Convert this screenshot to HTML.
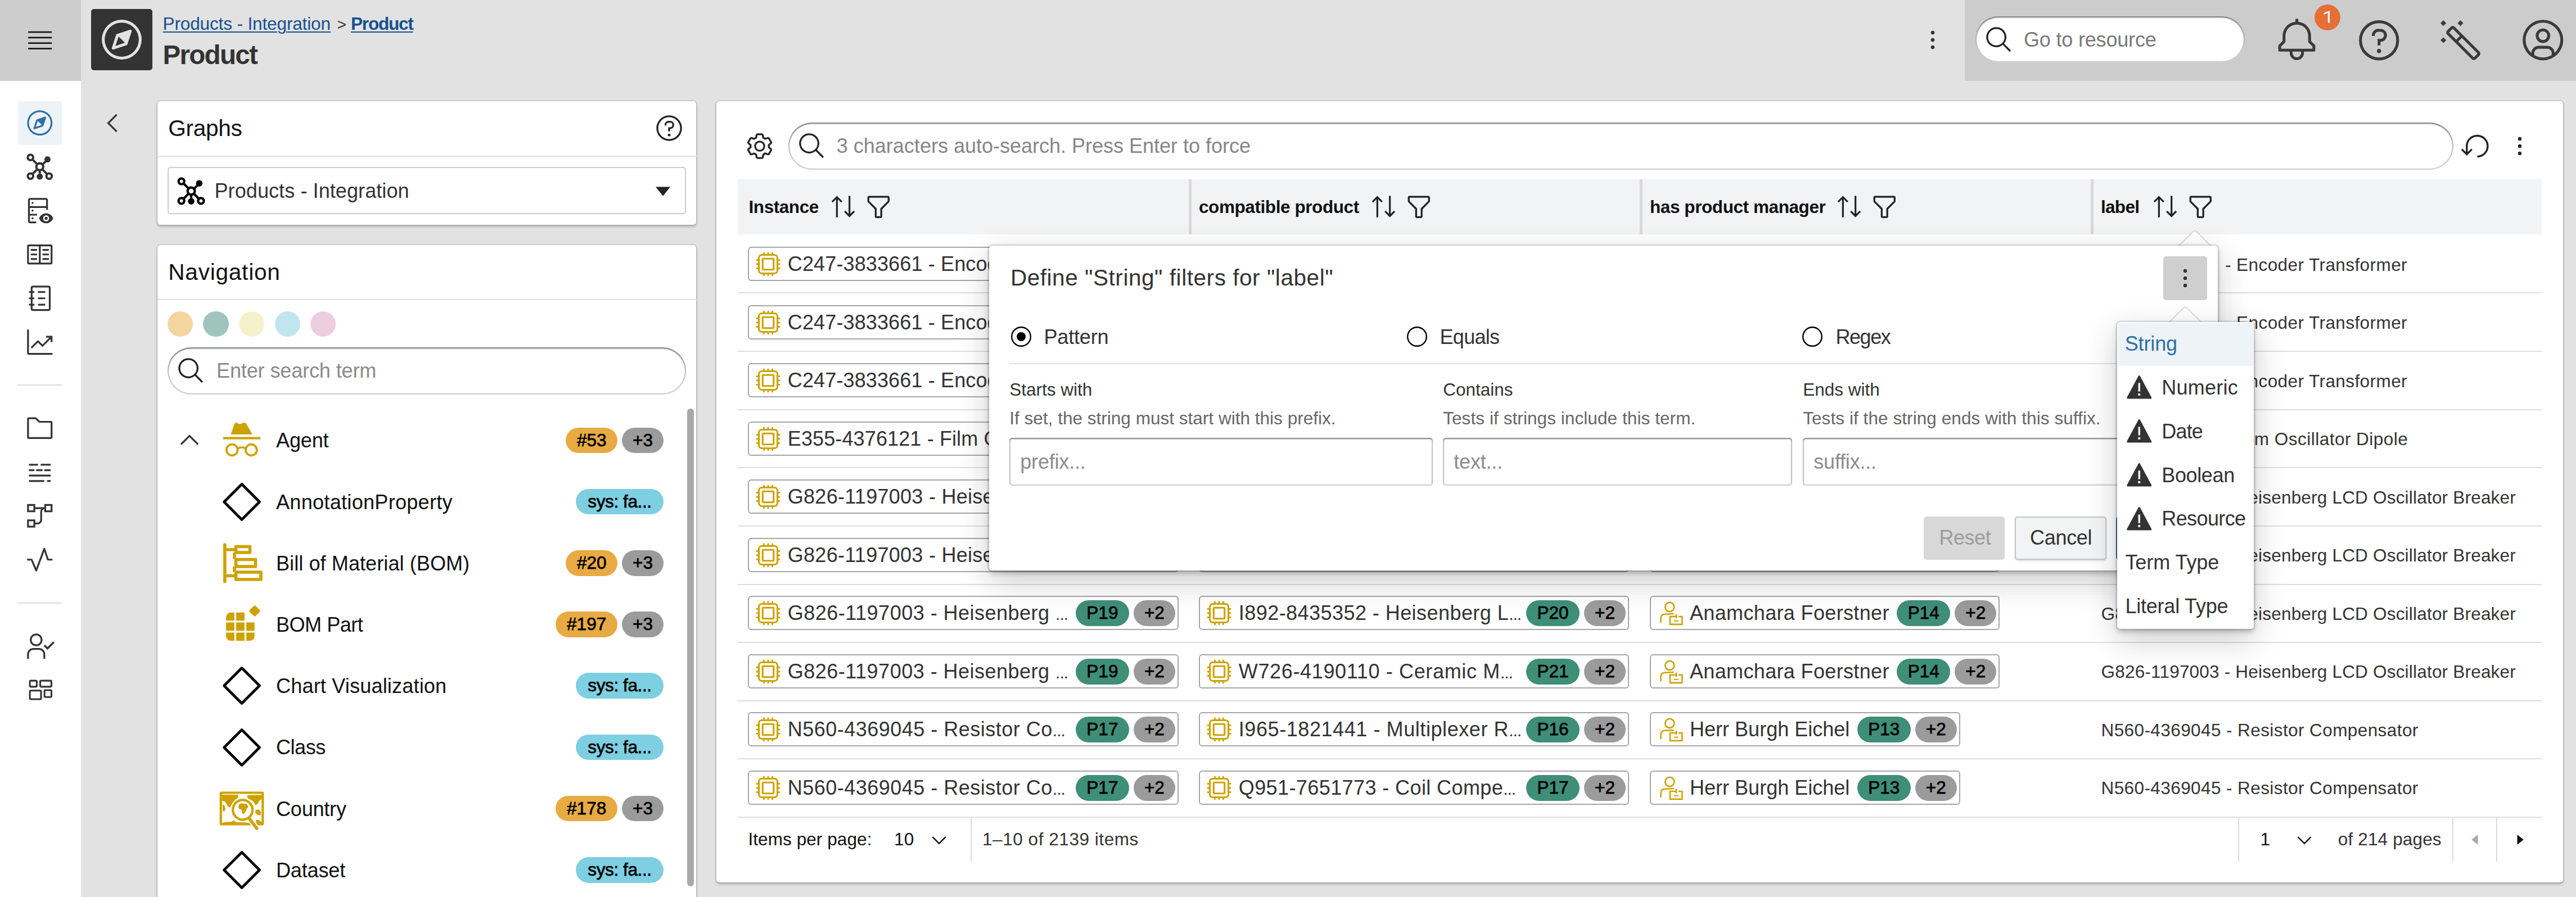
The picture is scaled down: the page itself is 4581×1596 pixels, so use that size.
<!DOCTYPE html>
<html><head><meta charset="utf-8"><title>Product</title>
<style>
html,body{margin:0;padding:0}
body{width:4581px;height:1596px;overflow:hidden;background:#e2e2e2;position:relative;font-family:"Liberation Sans",sans-serif;color:#333}
.t{position:absolute;white-space:pre;line-height:1}
.card{position:absolute;background:#fff;border-radius:5px;box-shadow:0 0 0 1.5px rgba(0,0,0,.12),0 3px 5px rgba(0,0,0,.22)}
.pill{position:absolute;background:#fff;border-radius:50px;box-shadow:inset 0 0 0 2.25px rgba(17,20,24,.2),inset 0 2.25px 2.25px rgba(17,20,24,.42)}
.inp{position:absolute;background:#fff;border-radius:5px;box-shadow:inset 0 0 0 2.25px rgba(17,20,24,.2),inset 0 2.25px 2.25px rgba(17,20,24,.36)}
.chip{position:absolute;box-sizing:border-box;height:61px;border:2px solid #a6a6a6;border-radius:6px;background:#fff}
.tag{position:absolute;height:45.5px;border-radius:23px;color:#000;font-size:31.5px;line-height:45.5px;text-align:center;white-space:pre;-webkit-text-stroke:0.75px #000}
.dots{font-size:30px;letter-spacing:-1px}
.sep{position:absolute;height:2px;background:#dedede}
</style></head>
<body>
<div style="position:absolute;left:0.0px;top:0.0px;width:144.0px;height:1596.0px;background:#fff"></div>
<div style="position:absolute;left:0.0px;top:0.0px;width:144.0px;height:144.0px;background:#cdcdcd"></div>
<svg style="position:absolute;left:0;top:0" width="144" height="144" viewBox="0 0 144 144" fill="#111"><rect x="50" y="55.80" width="42.2" height="2.6"/><rect x="50" y="65.60" width="42.2" height="2.6"/><rect x="50" y="75.40" width="42.2" height="2.6"/><rect x="50" y="85.20" width="42.2" height="2.6"/></svg>
<div style="position:absolute;left:32.0px;top:180.0px;width:78.0px;height:78.0px;background:#eef3f8;border-radius:5px"></div>
<svg style="position:absolute;left:45.2px;top:193.2px;color:#2f6fa7;" width="51.5" height="51.5" viewBox="0 0 32 32" fill="#2f6fa7"><path d="M22.707,9.2931a.9992.9992,0,0,0-1.0234-.2417l-9,3a1.001,1.001,0,0,0-.6323.6323l-3,9a1,1,0,0,0,1.2651,1.2651l9-3a1.0013,1.0013,0,0,0,.6323-.6324l3-9A1,1,0,0,0,22.707,9.2931ZM11.5811,20.419l2.2094-6.6284L18.21,18.21Z"/><path d="M16,30A14,14,0,1,1,30,16,14.0158,14.0158,0,0,1,16,30ZM16,4A12,12,0,1,0,28,16,12.0137,12.0137,0,0,0,16,4Z"/></svg>
<svg style="position:absolute;left:45.2px;top:271.2px;color:#333;" width="51.5" height="51.5" viewBox="0 0 32 32" fill="#333"><g fill="none" stroke="currentColor" stroke-width="2.5"><path d="M8.300 8.300l5 5M22.500 10l-4 4M8.300 23.700l5-5M16 19.500v4M23.700 23.700l-5-5"/><circle cx="16" cy="16" r="3.800" fill="#fff"/><circle cx="5.700" cy="5.700" r="3" fill="#fff"/><circle cx="5.700" cy="26.300" r="3" fill="#fff"/><circle cx="26.300" cy="26.300" r="3" fill="#fff"/></g><circle cx="24.500" cy="7.800" r="3.400"/><circle cx="16" cy="26.800" r="3.400"/></svg>
<svg style="position:absolute;left:45.2px;top:349.2px;color:#333;" width="51.5" height="51.5" viewBox="0 0 32 32" fill="#333"><g fill="none" stroke="currentColor" stroke-width="2" stroke-linejoin="round"><path d="M24 15V4.5a1.5 1.5 0 0 0-1.5-1.5h-17A1.5 1.5 0 0 0 4 4.5v23A1.5 1.5 0 0 0 5.500 29H12M4 12h20M4 20.500h9"/></g><circle cx="8" cy="7.5" r="1.1"/><circle cx="8" cy="16" r="1.1"/><circle cx="8" cy="24.500" r="1.1"/><path d="M30.8 24.500c-1.300-3.100-4.300-5.500-7.800-5.500s-6.500 2.400-7.800 5.500c1.300 3.100 4.300 5.500 7.800 5.500s6.500-2.400 7.800-5.500z"/><circle cx="23" cy="24.500" r="3.300" fill="#fff"/><circle cx="23" cy="24.500" r="1.700"/></svg>
<svg style="position:absolute;left:45.2px;top:427.2px;color:#333;" width="51.5" height="51.5" viewBox="0 0 32 32" fill="#333"><path d="M19 10H26V12H19zM19 15H26V17H19zM19 20H26V22H19zM6 10H13V12H6zM6 15H13V17H6zM6 20H13V22H6z"/><path d="M28,5H4A2.002,2.002,0,0,0,2,7V25a2.002,2.002,0,0,0,2,2H28a2.002,2.002,0,0,0,2-2V7A2.002,2.002,0,0,0,28,5ZM4,7H15V25H4ZM17,25V7H28V25Z"/></svg>
<svg style="position:absolute;left:45.2px;top:505.2px;color:#333;" width="51.5" height="51.5" viewBox="0 0 32 32" fill="#333"><g fill="none" stroke="currentColor" stroke-width="2" stroke-linejoin="round"><rect x="7" y="3" width="20" height="26" rx="1.5"/><path d="M4 9h6M4 16h6M4 23h6M14 9h8M14 16h8M14 23h8"/></g></svg>
<svg style="position:absolute;left:45.2px;top:583.2px;color:#333;" width="51.5" height="51.5" viewBox="0 0 32 32" fill="#333"><path d="M4,2H2V28a2,2,0,0,0,2,2H30V28H4Z"/><path d="M30,9H23v2h3.59L19,18.59l-4.29-4.3a1,1,0,0,0-1.42,0L6,21.59,7.41,23,14,16.41l4.29,4.3a1,1,0,0,0,1.42,0L28,12.41V16h2Z"/></svg>
<svg style="position:absolute;left:45.2px;top:736.2px;color:#333;" width="51.5" height="51.5" viewBox="0 0 32 32" fill="#333"><path d="M11.17,6l3.42,3.41.58.59H28V26H4V6h7.17m0-2H4A2,2,0,0,0,2,6V26a2,2,0,0,0,2,2H28a2,2,0,0,0,2-2V10a2,2,0,0,0-2-2H16L12.59,4.59A2,2,0,0,0,11.17,4Z"/></svg>
<svg style="position:absolute;left:45.2px;top:814.2px;color:#333;" width="51.5" height="51.5" viewBox="0 0 32 32" fill="#333"><path d="M4 7h10v2H4zM17 7h11v2H17zM4 13h6v2H4zM12 13h7v2h-7zM21 13h7v2h-7zM4 19h24v2H4zM4 25h17v2H4zM24 25h4v2h-4z"/></svg>
<svg style="position:absolute;left:45.2px;top:892.2px;color:#333;" width="51.5" height="51.5" viewBox="0 0 32 32" fill="#333"><g fill="none" stroke="currentColor" stroke-width="2"><rect x="3" y="4" width="7" height="7"/><rect x="22" y="4" width="7" height="7"/><rect x="3" y="21" width="7" height="7"/><path d="M10 7.500h12M10 24.500h3.500a4 4 0 0 0 4-4v-9a4 4 0 0 1 4-4"/></g></svg>
<svg style="position:absolute;left:45.2px;top:970.2px;color:#333;" width="51.5" height="51.5" viewBox="0 0 32 32" fill="#333"><path d="M12,29a1,1,0,0,1-.92-.62L6.33,17H2V15H7a1,1,0,0,1,.92.62L12,25.28,20.06,3.65A1,1,0,0,1,21,3a1,1,0,0,1,.93.68L25.72,15H30v2H25a1,1,0,0,1-.95-.68L21,7,12.94,28.35A1,1,0,0,1,12,29Z"/></svg>
<svg style="position:absolute;left:45.2px;top:1124.2px;color:#333;" width="51.5" height="51.5" viewBox="0 0 32 32" fill="#333"><g fill="none" stroke="currentColor" stroke-width="2"><circle cx="12" cy="9" r="6"/><path d="M3 30v-5a6 6 0 0 1 6-6h6a6 6 0 0 1 6 6v5"/><path d="M21 15l3.500 3.500 7-7" stroke-width="2.2"/></g></svg>
<svg style="position:absolute;left:46.8px;top:1204.8px;color:#333;" width="49" height="49" viewBox="0 0 32 32" fill="#333"><g fill="none" stroke="currentColor" stroke-width="2" stroke-linejoin="round"><rect x="4" y="4" width="8" height="7" rx="1"/><rect x="16" y="4" width="13" height="7" rx="1"/><rect x="4" y="15.500" width="13" height="10" rx="1"/><rect x="21" y="15" width="8" height="8" rx="1"/></g></svg>
<div style="position:absolute;left:32.0px;top:684.0px;width:78.0px;height:2.3px;background:#dcdcdc"></div>
<div style="position:absolute;left:32.0px;top:1071.5px;width:78.0px;height:2.3px;background:#dcdcdc"></div>
<div style="position:absolute;left:162.0px;top:16.0px;width:108.7px;height:108.7px;background:#333;border-radius:5px"></div>
<svg style="position:absolute;left:175.8px;top:29.8px;" width="81" height="81" viewBox="0 0 32 32" fill="#e2e2e2"><path d="M22.707,9.2931a.9992.9992,0,0,0-1.0234-.2417l-9,3a1.001,1.001,0,0,0-.6323.6323l-3,9a1,1,0,0,0,1.2651,1.2651l9-3a1.0013,1.0013,0,0,0,.6323-.6324l3-9A1,1,0,0,0,22.707,9.2931ZM11.5811,20.419l2.2094-6.6284L18.21,18.21Z"/><path d="M16,30A14,14,0,1,1,30,16,14.0158,14.0158,0,0,1,16,30ZM16,4A12,12,0,1,0,28,16,12.0137,12.0137,0,0,0,16,4Z"/></svg>
<div class="t" style="left:289.6px;top:27.1px;font-size:31.5px;color:#15508f;letter-spacing:-0.13px;text-decoration:underline;text-decoration-thickness:2.3px;text-underline-offset:3px;">Products - Integration</div>
<div class="t" style="left:599.5px;top:29.6px;font-size:28px;">&gt;</div>
<div class="t" style="left:624.0px;top:27.1px;font-size:31.5px;font-weight:700;color:#15508f;letter-spacing:-1.19px;text-decoration:underline;text-decoration-thickness:2.3px;text-underline-offset:3px;">Product</div>
<div class="t" style="left:289.5px;top:74.2px;font-size:47.5px;font-weight:700;letter-spacing:-1.7px;">Product</div>
<svg style="position:absolute;left:3411.0px;top:45.0px;" width="52" height="52" viewBox="0 0 32 32" fill="#333"><circle cx="16" cy="8" r="2"/><circle cx="16" cy="16" r="2"/><circle cx="16" cy="24" r="2"/></svg>
<div style="position:absolute;left:3494.0px;top:0.0px;width:1087.0px;height:144.0px;background:#cccccc"></div>
<div class="pill" style="left:3513px;top:29px;width:479px;height:82px"></div>
<svg style="position:absolute;left:3528.8px;top:44.6px;" width="52" height="52" viewBox="0 0 32 32" fill="#222"><path d="M29,27.5859l-7.5521-7.5521a11.0177,11.0177,0,1,0-1.4141,1.4141L27.5859,29ZM4,13a9,9,0,1,1,9,9A9.01,9.01,0,0,1,4,13Z"/></svg>
<div class="t" style="left:3599.0px;top:52.5px;font-size:36px;color:#7a7a7a;letter-spacing:-0.18px;">Go to resource</div>
<svg style="position:absolute;left:4044.0px;top:30.7px;" width="81" height="81" viewBox="0 0 32 32" fill="#3a3a3a"><path d="M28.7071,19.293,26,16.5859V13a10.0136,10.0136,0,0,0-9-9.9492V1H15V3.0508A10.0136,10.0136,0,0,0,6,13v3.5859L3.2929,19.293A1,1,0,0,0,3,20v3a1,1,0,0,0,1,1h7v.7768a5.152,5.152,0,0,0,4.5,5.1987A5.0057,5.0057,0,0,0,21,25V24h7a1,1,0,0,0,1-1V20A1,1,0,0,0,28.7071,19.293ZM19,25a3,3,0,0,1-6,0V24h6Zm8-3H5V20.4141L7.707,17.707A1,1,0,0,0,8,17V13a8,8,0,0,1,16,0v4a1,1,0,0,0,.293.707L27,20.4141Z"/></svg>
<div style="position:absolute;left:4116.0px;top:7.9px;width:46.0px;height:46.0px;background:#e66f36;border-radius:50%"></div>
<svg style="position:absolute;left:4116px;top:7.9px" width="46" height="46" viewBox="4116 7.9 46 46"><path fill="#fff" d="M4143 19.2V40.3H4139.8V23L4132.6 25.8V22.9L4142.4 19.2Z"/></svg>
<svg style="position:absolute;left:4189.6px;top:30.8px;" width="81.5" height="81.5" viewBox="0 0 32 32" fill="#3a3a3a"><path d="M16,2A14,14,0,1,0,30,16,14,14,0,0,0,16,2Zm0,26A12,12,0,1,1,28,16,12,12,0,0,1,16,28Z"/><circle cx="16" cy="23.5" r="1.5"/><path d="M17,8H15.5A4.49,4.49,0,0,0,11,12.5V13h2v-.5A2.5,2.5,0,0,1,15.5,10H17a2.5,2.5,0,0,1,0,5H15v4.5h2V17a4.5,4.5,0,0,0,0-9Z"/></svg>
<svg style="position:absolute;left:4334.9px;top:31.2px;" width="81" height="81" viewBox="0 0 32 32" fill="#3a3a3a"><path d="M29.4141,24,12,6.5859a2.0476,2.0476,0,0,0-2.8281,0l-2.586,2.586a2.0021,2.0021,0,0,0,0,2.8281L23.999,29.4141a2.0024,2.0024,0,0,0,2.8281,0l2.587-2.5865a1.9993,1.9993,0,0,0,0-2.8281ZM8,10.5859,10.5859,8l5,5-2.5866,2.5869-5-5ZM25.4131,28l-11-10.999L17,14.4141l11,11Z"/><rect x="2.5858" y="14.5858" width="2.8284" height="2.8284" transform="rotate(-45 4 16)"/><rect x="14.5858" y="2.5858" width="2.8284" height="2.8284" transform="rotate(-45 16 4)"/><rect x="2.5858" y="2.5858" width="2.8284" height="2.8284" transform="rotate(-45 4 4)"/></svg>
<svg style="position:absolute;left:4480.6px;top:30.2px;" width="82.5" height="82.5" viewBox="0 0 32 32" fill="#3a3a3a"><path d="M16,8a5,5,0,1,0,5,5A5,5,0,0,0,16,8Zm0,8a3,3,0,1,1,3-3A3.0034,3.0034,0,0,1,16,16Z"/><path d="M16,2A14,14,0,1,0,30,16,14.0158,14.0158,0,0,0,16,2ZM10,26.3765V25a3.0033,3.0033,0,0,1,3-3h6a3.0033,3.0033,0,0,1,3,3v1.3765a11.8989,11.8989,0,0,1-12,0Zm13.9925-1.4507A5.0016,5.0016,0,0,0,19,20H13a5.0016,5.0016,0,0,0-4.9925,4.9258,12,12,0,1,1,15.985,0Z"/></svg>
<svg style="position:absolute;left:174.3px;top:193.0px;" width="52" height="52" viewBox="0 0 32 32" fill="#333"><path d="M10 16L20 6l1.4 1.4-8.6 8.6 8.6 8.6L20 26z"/></svg>
<div class="card" style="left:280px;top:179.500px;width:958.300px;height:220.500px"></div>
<div class="t" style="left:299.3px;top:207.9px;font-size:40.5px;color:#111;letter-spacing:-0.25px;">Graphs</div>
<svg style="position:absolute;left:1163.8px;top:202.0px;" width="52" height="52" viewBox="0 0 32 32" fill="#222"><path d="M16,2A14,14,0,1,0,30,16,14,14,0,0,0,16,2Zm0,26A12,12,0,1,1,28,16,12,12,0,0,1,16,28Z"/><circle cx="16" cy="23.5" r="1.5"/><path d="M17,8H15.5A4.49,4.49,0,0,0,11,12.5V13h2v-.5A2.5,2.5,0,0,1,15.5,10H17a2.5,2.5,0,0,1,0,5H15v4.5h2V17a4.5,4.5,0,0,0,0-9Z"/></svg>
<div style="position:absolute;left:280.0px;top:276.5px;width:959.0px;height:2.3px;background:#e0e0e0"></div>
<div style="position:absolute;left:298.3px;top:297.3px;width:922.0px;height:84.2px;box-sizing:border-box;border:2px solid #cdcdcd;border-radius:5px;background:#fff"></div>
<svg style="position:absolute;left:312.7px;top:312.7px;color:#000;" width="54" height="54" viewBox="0 0 32 32" fill="#000"><g fill="none" stroke="currentColor" stroke-width="2.5"><path d="M8.300 8.300l5 5M22.500 10l-4 4M8.300 23.700l5-5M16 19.500v4M23.700 23.700l-5-5"/><circle cx="16" cy="16" r="3.800" fill="#fff"/><circle cx="5.700" cy="5.700" r="3" fill="#fff"/><circle cx="5.700" cy="26.300" r="3" fill="#fff"/><circle cx="26.300" cy="26.300" r="3" fill="#fff"/></g><circle cx="24.500" cy="7.800" r="3.400"/><circle cx="16" cy="26.800" r="3.400"/></svg>
<div class="t" style="left:381.5px;top:321.8px;font-size:36px;letter-spacing:0.09px;">Products - Integration</div>
<svg style="position:absolute;left:1153.0px;top:312.7px;" width="52" height="52" viewBox="0 0 32 32" fill="#222"><path d="M24 12l-8 10-8-10z"/></svg>
<div class="card" style="left:280px;top:435.500px;width:958.300px;height:1200px"></div>
<div class="t" style="left:299.3px;top:464.1px;font-size:40.5px;color:#111;letter-spacing:0.79px;">Navigation</div>
<div style="position:absolute;left:280.0px;top:532.0px;width:959.0px;height:2.3px;background:#e0e0e0"></div>
<div style="position:absolute;left:297.8px;top:553.9px;width:45.4px;height:45.4px;background:#f3d5a0;border-radius:50%"></div>
<div style="position:absolute;left:361.3px;top:553.9px;width:45.4px;height:45.4px;background:#9ec4bb;border-radius:50%"></div>
<div style="position:absolute;left:424.9px;top:553.9px;width:45.4px;height:45.4px;background:#f5f2cb;border-radius:50%"></div>
<div style="position:absolute;left:488.5px;top:553.9px;width:45.4px;height:45.4px;background:#bfe5ee;border-radius:50%"></div>
<div style="position:absolute;left:552.1px;top:553.9px;width:45.4px;height:45.4px;background:#edcde0;border-radius:50%"></div>
<div class="pill" style="left:298.300px;top:618px;width:922px;height:83.500px"></div>
<svg style="position:absolute;left:313.9px;top:634.3px;" width="52" height="52" viewBox="0 0 32 32" fill="#222"><path d="M29,27.5859l-7.5521-7.5521a11.0177,11.0177,0,1,0-1.4141,1.4141L27.5859,29ZM4,13a9,9,0,1,1,9,9A9.01,9.01,0,0,1,4,13Z"/></svg>
<div class="t" style="left:385.0px;top:642.0px;font-size:36px;color:#8a8a8a;letter-spacing:-0.11px;">Enter search term</div>
<div style="position:absolute;left:1222.3px;top:727.0px;width:11.7px;height:849.5px;background:#a9a9a9;border-radius:6px"></div>
<svg style="position:absolute;left:311.0px;top:757.2px;" width="52" height="52" viewBox="0 0 32 32" fill="#333"><path d="M16 10l10 10-1.4 1.4-8.6-8.6-8.6 8.6L6 20z"/></svg>
<svg style="position:absolute;left:397.0px;top:751.3px" width="66" height="62" viewBox="0 0 66 62" fill="#cda200"><path d="M13.500 22L20.500 1.500c2.500-1 4.500 0.300 6.500 1.200 2 .9 3.500 .9 5.500 0 2.500-1.200 5-2.200 7.500-1.200L52 22z"/><rect x="0" y="26.500" width="66" height="4.200"/><g fill="none" stroke="#cda200" stroke-width="3.800"><circle cx="15.700" cy="49.500" r="9.900"/><circle cx="49.800" cy="49.500" r="9.900"/><path d="M25.500 47c4-2.500 10-2.500 14.500 0"/></g></svg>
<div class="t" style="left:491.0px;top:766.3px;font-size:36px;color:#111;letter-spacing:-0.136px;">Agent</div>
<div class="tag" style="left:1106.0px;top:760.6px;width:74px;background:#9b9b9b">+3</div>
<div class="tag" style="left:1006.1px;top:760.6px;width:92.4px;background:#e8aa42">#53</div>
<svg style="position:absolute;left:392.0px;top:854.8px" width="76" height="76" viewBox="-38 -38 76 76"><path d="M0 -31.500L31.500 0 0 31.500-31.500 0z" fill="none" stroke="#000" stroke-width="4.600" stroke-linejoin="round"/></svg>
<div class="t" style="left:491.0px;top:875.5px;font-size:36px;color:#111;letter-spacing:0.317px;">AnnotationProperty</div>
<div class="tag" style="left:1024.0px;top:869.8px;width:156px;background:#7dcfe1;letter-spacing:-0.4px">sys: fa...</div>
<svg style="position:absolute;left:395.5px;top:966.0px" width="72" height="72" viewBox="0 0 72 72"><rect x="1" y="0.500" width="5.600" height="71" rx="2.500" fill="#cda200"/><g fill="none" stroke="#cda200" stroke-width="5.500" stroke-linejoin="round"><rect x="23.500" y="6.500" width="25" height="10.500"/><rect x="23.500" y="29.500" width="35" height="12.500"/><rect x="23.500" y="52" width="44.500" height="13"/><path d="M5 12h18M5 58.500h18M21 17v12M21 42v10"/></g></svg>
<div class="t" style="left:491.0px;top:984.7px;font-size:36px;color:#111;letter-spacing:0.097px;">Bill of Material (BOM)</div>
<div class="tag" style="left:1106.0px;top:979.0px;width:74px;background:#9b9b9b">+3</div>
<div class="tag" style="left:1006.1px;top:979.0px;width:92.4px;background:#e8aa42">#20</div>
<svg style="position:absolute;left:397.8px;top:1072.6px" width="72" height="72" viewBox="0 0 72 72" fill="#cda200"><defs><clipPath id="bpc"><rect x="4" y="16.500" width="50.800" height="50.800" rx="9"/></clipPath></defs><g clip-path="url(#bpc)"><rect x="4.0" y="16.5" width="14.8" height="14.8"/><rect x="22.0" y="16.5" width="14.8" height="14.8"/><rect x="4.0" y="34.5" width="14.8" height="14.8"/><rect x="22.0" y="34.5" width="14.8" height="14.8"/><rect x="40.0" y="34.5" width="14.8" height="14.8"/><rect x="4.0" y="52.5" width="14.8" height="14.8"/><rect x="22.0" y="52.5" width="14.8" height="14.8"/><rect x="40.0" y="52.5" width="14.8" height="14.8"/></g><rect x="47.500" y="6.500" width="15" height="15" rx="2.500" transform="rotate(45 55 14)"/></svg>
<div class="t" style="left:491.0px;top:1093.9px;font-size:36px;color:#111;letter-spacing:-0.454px;">BOM Part</div>
<div class="tag" style="left:1106.0px;top:1088.2px;width:74px;background:#9b9b9b">+3</div>
<div class="tag" style="left:987.8px;top:1088.2px;width:110.7px;background:#e8aa42">#197</div>
<svg style="position:absolute;left:392.0px;top:1182.4px" width="76" height="76" viewBox="-38 -38 76 76"><path d="M0 -31.500L31.500 0 0 31.500-31.500 0z" fill="none" stroke="#000" stroke-width="4.600" stroke-linejoin="round"/></svg>
<div class="t" style="left:491.0px;top:1203.1px;font-size:36px;color:#111;letter-spacing:0.2px;">Chart Visualization</div>
<div class="tag" style="left:1024.0px;top:1197.4px;width:156px;background:#7dcfe1;letter-spacing:-0.4px">sys: fa...</div>
<svg style="position:absolute;left:392.0px;top:1291.6px" width="76" height="76" viewBox="-38 -38 76 76"><path d="M0 -31.500L31.500 0 0 31.500-31.500 0z" fill="none" stroke="#000" stroke-width="4.600" stroke-linejoin="round"/></svg>
<div class="t" style="left:491.0px;top:1312.3px;font-size:36px;color:#111;letter-spacing:-0.444px;">Class</div>
<div class="tag" style="left:1024.0px;top:1306.6px;width:156px;background:#7dcfe1;letter-spacing:-0.4px">sys: fa...</div>
<svg style="position:absolute;left:390.0px;top:1407.0px" width="80" height="72" viewBox="0 0 80 72"><rect x="2.700" y="3.500" width="74.500" height="56" rx="1" fill="#fff" stroke="#cda200" stroke-width="4.200"/><g fill="#cda200"><path d="M4.500 7H33l.5 5-6.500 5-3 5-4 6-2.500 2-3.500-4-4-7-5.500-1z"/><path d="M48.700 9.400l4.900-1.900h22v6.200l-4.900 4.900-2.400 4.900-3.700 2.400-3.700-6.100-4.900-3.700-4.900-2.400z"/><path d="M64.600 33.900l6.100-.6 3.700 4.900-1.200 5.500-5.500-.6-3.700-3.700z"/><path d="M4.500 57l7.500-1.500 10-.5 4-2.500 4 3.500 19 .5 5 1.500v1.500H4.500z"/><path d="M64.600 51.700l5.400.3 5.600 4v2l-9.600-.5z"/><path d="M6 24l3 2 2 6-2 5-3-1z"/></g><circle cx="41.600" cy="33.900" r="17.500" fill="#fff" stroke="#fff" stroke-width="8.500"/><circle cx="41.600" cy="33.900" r="17.500" fill="#fff" stroke="#cda200" stroke-width="4.300"/><path d="M34.600 24.700l4.300-2.500 9.800 1.300 3 4.900-3 3.600-1.900 5-3 4.200-3.100-.6-.6-6.100-4.900-2.500-1.200-3.600z" fill="#cda200"/><path d="M53.600 49.800L67.300 67.600" stroke="#fff" stroke-width="9.500" stroke-linecap="butt"/><path d="M53.600 49.800L66.800 67" stroke="#cda200" stroke-width="5.500" stroke-linecap="round"/></svg>
<div class="t" style="left:491.0px;top:1421.5px;font-size:36px;color:#111;letter-spacing:-0.193px;">Country</div>
<div class="tag" style="left:1106.0px;top:1415.8px;width:74px;background:#9b9b9b">+3</div>
<div class="tag" style="left:987.8px;top:1415.8px;width:110.7px;background:#e8aa42">#178</div>
<svg style="position:absolute;left:392.0px;top:1510.0px" width="76" height="76" viewBox="-38 -38 76 76"><path d="M0 -31.500L31.500 0 0 31.500-31.500 0z" fill="none" stroke="#000" stroke-width="4.600" stroke-linejoin="round"/></svg>
<div class="t" style="left:491.0px;top:1530.7px;font-size:36px;color:#111;letter-spacing:-0.138px;">Dataset</div>
<div class="tag" style="left:1024.0px;top:1525.0px;width:156px;background:#7dcfe1;letter-spacing:-0.4px">sys: fa...</div>
<div class="card" style="left:1273.500px;top:179.500px;width:3284.500px;height:1390px"></div>
<svg style="position:absolute;left:1324.8px;top:233.7px;" width="52" height="52" viewBox="0 0 32 32" fill="#222"><path d="M27,16.76c0-.25,0-.5,0-.76s0-.51,0-.77l1.92-1.68A2,2,0,0,0,29.3,11L26.94,7a2,2,0,0,0-1.73-1,2,2,0,0,0-.64.1l-2.43.82a11.35,11.35,0,0,0-1.31-.75l-.51-2.52a2,2,0,0,0-2-1.61H13.64a2,2,0,0,0-2,1.61l-.51,2.52a11.48,11.48,0,0,0-1.32.75L7.43,6.06A2,2,0,0,0,6.79,6,2,2,0,0,0,5.06,7L2.7,11a2,2,0,0,0,.41,2.51L5,15.24c0,.25,0,.5,0,.76s0,.51,0,.77L3.11,18.45A2,2,0,0,0,2.7,21L5.06,25a2,2,0,0,0,1.73,1,2,2,0,0,0,.64-.1l2.43-.82a11.35,11.35,0,0,0,1.31.75l.51,2.52a2,2,0,0,0,2,1.61h4.72a2,2,0,0,0,2-1.61l.51-2.52a11.48,11.48,0,0,0,1.32-.75l2.42.82a2,2,0,0,0,.64.1,2,2,0,0,0,1.73-1L29.3,21a2,2,0,0,0-.41-2.51ZM25.21,24l-3.43-1.16a8.86,8.86,0,0,1-2.71,1.57L18.36,28H13.64l-.71-3.55a9.36,9.36,0,0,1-2.7-1.57L6.79,24,4.43,20l2.72-2.4a8.9,8.9,0,0,1,0-3.13L4.43,12,6.79,8l3.43,1.16a8.86,8.86,0,0,1,2.71-1.57L13.64,4h4.72l.71,3.55a9.36,9.36,0,0,1,2.7,1.57L25.21,8,27.57,12l-2.72,2.4a8.9,8.9,0,0,1,0,3.13L27.57,20Z"/><path d="M16,22a6,6,0,1,1,6-6A5.94,5.94,0,0,1,16,22Zm0-10a3.91,3.91,0,0,0-4,4,3.91,3.91,0,0,0,4,4,3.91,3.91,0,0,0,4-4A3.91,3.91,0,0,0,16,12Z"/></svg>
<div class="pill" style="left:1402px;top:217.500px;width:2961px;height:84px"></div>
<svg style="position:absolute;left:1418.4px;top:234.1px;" width="52" height="52" viewBox="0 0 32 32" fill="#222"><path d="M29,27.5859l-7.5521-7.5521a11.0177,11.0177,0,1,0-1.4141,1.4141L27.5859,29ZM4,13a9,9,0,1,1,9,9A9.01,9.01,0,0,1,4,13Z"/></svg>
<div class="t" style="left:1487.8px;top:242.0px;font-size:36px;color:#868686;">3 characters auto-search. Press Enter to force</div>
<svg style="position:absolute;left:4375.0px;top:233.0px;" width="54" height="54" viewBox="0 0 32 32" fill="#222"><path d="M18,28A12,12,0,1,0,6,16v6.2L2.4,18.6,1,20l6,6,6-6-1.4-1.4L8,22.2V16H8A10,10,0,1,1,18,26Z"/></svg>
<svg style="position:absolute;left:4454.6px;top:234.1px;" width="52" height="52" viewBox="0 0 32 32" fill="#222"><circle cx="16" cy="8" r="2"/><circle cx="16" cy="16" r="2"/><circle cx="16" cy="24" r="2"/></svg>
<div style="position:absolute;left:1312.0px;top:319.0px;width:3208.0px;height:97.5px;background:#f2f3f5"></div>
<div style="position:absolute;left:2114.0px;top:319.0px;width:4.8px;height:97.5px;background:#d9d9dc"></div>
<div style="position:absolute;left:2916.0px;top:319.0px;width:4.8px;height:97.5px;background:#d9d9dc"></div>
<div style="position:absolute;left:3718.0px;top:319.0px;width:4.8px;height:97.5px;background:#d9d9dc"></div>
<div class="t" style="left:1331.5px;top:352.7px;font-size:31.5px;font-weight:700;color:#111;letter-spacing:-0.43px;">Instance</div>
<div class="t" style="left:2132.0px;top:352.7px;font-size:31.5px;font-weight:700;color:#111;letter-spacing:-0.42px;">compatible product</div>
<div class="t" style="left:2934.0px;top:352.7px;font-size:31.5px;font-weight:700;color:#111;letter-spacing:-0.42px;">has product manager</div>
<div class="t" style="left:3736.0px;top:352.7px;font-size:31.5px;font-weight:700;color:#111;letter-spacing:-0.7px;">label</div>
<svg style="position:absolute;left:1473.5px;top:342.3px;" width="51" height="51" viewBox="0 0 32 32" fill="#222"><path d="M27.6 20.6L24 24.2V4h-2v20.2l-3.6-3.6L17 22l6 6 6-6zM9 4l-6 6 1.4 1.4L8 7.8V28h2V7.8l3.6 3.6L15 10z"/></svg>
<svg style="position:absolute;left:1535.8px;top:341.6px;" width="52.5" height="52.5" viewBox="0 0 32 32" fill="#222"><path d="M18,28H14a2,2,0,0,1-2-2V18.41L4.59,11A2,2,0,0,1,4,9.59V6A2,2,0,0,1,6,4H26a2,2,0,0,1,2,2V9.59A2,2,0,0,1,27.41,11L20,18.41V26A2,2,0,0,1,18,28ZM6,6V9.59l8,8V26h4V17.59l8-8V6Z"/></svg>
<svg style="position:absolute;left:2435.2px;top:342.3px;" width="51" height="51" viewBox="0 0 32 32" fill="#222"><path d="M27.6 20.6L24 24.2V4h-2v20.2l-3.6-3.6L17 22l6 6 6-6zM9 4l-6 6 1.4 1.4L8 7.8V28h2V7.8l3.6 3.6L15 10z"/></svg>
<svg style="position:absolute;left:2496.8px;top:341.6px;" width="52.5" height="52.5" viewBox="0 0 32 32" fill="#222"><path d="M18,28H14a2,2,0,0,1-2-2V18.41L4.59,11A2,2,0,0,1,4,9.59V6A2,2,0,0,1,6,4H26a2,2,0,0,1,2,2V9.59A2,2,0,0,1,27.41,11L20,18.41V26A2,2,0,0,1,18,28ZM6,6V9.59l8,8V26h4V17.59l8-8V6Z"/></svg>
<svg style="position:absolute;left:3263.3px;top:342.3px;" width="51" height="51" viewBox="0 0 32 32" fill="#222"><path d="M27.6 20.6L24 24.2V4h-2v20.2l-3.6-3.6L17 22l6 6 6-6zM9 4l-6 6 1.4 1.4L8 7.8V28h2V7.8l3.6 3.6L15 10z"/></svg>
<svg style="position:absolute;left:3325.4px;top:341.6px;" width="52.5" height="52.5" viewBox="0 0 32 32" fill="#222"><path d="M18,28H14a2,2,0,0,1-2-2V18.41L4.59,11A2,2,0,0,1,4,9.59V6A2,2,0,0,1,6,4H26a2,2,0,0,1,2,2V9.59A2,2,0,0,1,27.41,11L20,18.41V26A2,2,0,0,1,18,28ZM6,6V9.59l8,8V26h4V17.59l8-8V6Z"/></svg>
<svg style="position:absolute;left:3824.7px;top:342.3px;" width="51" height="51" viewBox="0 0 32 32" fill="#222"><path d="M27.6 20.6L24 24.2V4h-2v20.2l-3.6-3.6L17 22l6 6 6-6zM9 4l-6 6 1.4 1.4L8 7.8V28h2V7.8l3.6 3.6L15 10z"/></svg>
<svg style="position:absolute;left:3886.6px;top:341.6px;" width="52.5" height="52.5" viewBox="0 0 32 32" fill="#222"><path d="M18,28H14a2,2,0,0,1-2-2V18.41L4.59,11A2,2,0,0,1,4,9.59V6A2,2,0,0,1,6,4H26a2,2,0,0,1,2,2V9.59A2,2,0,0,1,27.41,11L20,18.41V26A2,2,0,0,1,18,28ZM6,6V9.59l8,8V26h4V17.59l8-8V6Z"/></svg>
<div class="sep" style="left:1312px;top:520px;width:3208px"></div>
<div class="chip" style="left:1330.4px;top:439.0px;width:765.6px"><svg style="position:absolute;left:9.5px;top:4.5px;" width="48" height="48" viewBox="0 0 32 32" fill="#333"><g fill="none" stroke="#cda200"><rect x="5" y="5" width="22" height="22" rx="3.5" stroke-width="2.1"/><rect x="9.5" y="9.500" width="13" height="13" rx="1" stroke-width="2.1"/><path stroke-width="1.9" stroke-linecap="round" d="M11 2.600v2M16 2.600v2M21 2.600v2M11 27.400v2M16 27.400v2M21 27.400v2M2.600 11h2M2.600 16h2M2.600 21h2M27.400 11h2M27.400 16h2M27.400 21h2"/></g></svg><div class="t" style="left:68.4px;top:10.6px;font-size:36px;letter-spacing:0.134px;">C247-3833661 - Encoder Tr<span class="dots">...</span></div><div class="tag" style="left:683.5px;top:6.0px;width:74px;background:#9b9b9b">+2</div><div class="tag" style="left:580.5px;top:6.0px;width:95px;background:#3f8e78">P17</div></div>
<div class="chip" style="left:2132.4px;top:439.0px;width:764.8px"><svg style="position:absolute;left:9.5px;top:4.5px;" width="48" height="48" viewBox="0 0 32 32" fill="#333"><g fill="none" stroke="#cda200"><rect x="5" y="5" width="22" height="22" rx="3.5" stroke-width="2.1"/><rect x="9.5" y="9.500" width="13" height="13" rx="1" stroke-width="2.1"/><path stroke-width="1.9" stroke-linecap="round" d="M11 2.600v2M16 2.600v2M21 2.600v2M11 27.400v2M16 27.400v2M21 27.400v2M2.600 11h2M2.600 16h2M2.600 21h2M27.400 11h2M27.400 16h2M27.400 21h2"/></g></svg><div class="t" style="left:68.4px;top:10.6px;font-size:36px;letter-spacing:0.447px;">I892-8435352 - Heisenberg L<span class="dots">...</span></div><div class="tag" style="left:682.7px;top:6.0px;width:74px;background:#9b9b9b">+2</div><div class="tag" style="left:579.7px;top:6.0px;width:95px;background:#3f8e78">P20</div></div>
<div class="chip" style="left:2934.4px;top:439.0px;width:622.0px"><svg style="position:absolute;left:-1.7px;top:-1.4px" width="62" height="56" viewBox="0 0 62 56"><g fill="none" stroke="#cda200" stroke-width="2.600"><circle cx="34.250" cy="19" r="8.100"/><path d="M18.550 46.300V38.500Q18.550 32.300 25.500 31.700L40.500 31.100" stroke-linecap="round"/><path d="M47.250 36H34.950V49.900H56.350V36H49.850M45.950 31.800V39.200" stroke-linejoin="miter"/><path d="M41.750 43.750H49.850" stroke-width="2"/></g></svg><div class="t" style="left:68.6px;top:10.6px;font-size:36px;letter-spacing:0.35px;">Anamchara Foerstner</div><div class="tag" style="left:539.9px;top:6.0px;width:74px;background:#9b9b9b">+2</div><div class="tag" style="left:436.9px;top:6.0px;width:95px;background:#3f8e78">P14</div></div>
<div class="t" style="left:3957.0px;top:455.6px;font-size:31.5px;letter-spacing:0.423px;">- Encoder Transformer</div>
<div class="sep" style="left:1312px;top:624px;width:3208px"></div>
<div class="chip" style="left:1330.4px;top:543.0px;width:765.6px"><svg style="position:absolute;left:9.5px;top:4.5px;" width="48" height="48" viewBox="0 0 32 32" fill="#333"><g fill="none" stroke="#cda200"><rect x="5" y="5" width="22" height="22" rx="3.5" stroke-width="2.1"/><rect x="9.5" y="9.500" width="13" height="13" rx="1" stroke-width="2.1"/><path stroke-width="1.9" stroke-linecap="round" d="M11 2.600v2M16 2.600v2M21 2.600v2M11 27.400v2M16 27.400v2M21 27.400v2M2.600 11h2M2.600 16h2M2.600 21h2M27.400 11h2M27.400 16h2M27.400 21h2"/></g></svg><div class="t" style="left:68.4px;top:10.6px;font-size:36px;letter-spacing:0.134px;">C247-3833661 - Encoder Tr<span class="dots">...</span></div><div class="tag" style="left:683.5px;top:6.0px;width:74px;background:#9b9b9b">+2</div><div class="tag" style="left:580.5px;top:6.0px;width:95px;background:#3f8e78">P17</div></div>
<div class="chip" style="left:2132.4px;top:543.0px;width:764.8px"><svg style="position:absolute;left:9.5px;top:4.5px;" width="48" height="48" viewBox="0 0 32 32" fill="#333"><g fill="none" stroke="#cda200"><rect x="5" y="5" width="22" height="22" rx="3.5" stroke-width="2.1"/><rect x="9.5" y="9.500" width="13" height="13" rx="1" stroke-width="2.1"/><path stroke-width="1.9" stroke-linecap="round" d="M11 2.600v2M16 2.600v2M21 2.600v2M11 27.400v2M16 27.400v2M21 27.400v2M2.600 11h2M2.600 16h2M2.600 21h2M27.400 11h2M27.400 16h2M27.400 21h2"/></g></svg><div class="t" style="left:68.4px;top:10.6px;font-size:36px;letter-spacing:0.447px;">I892-8435352 - Heisenberg L<span class="dots">...</span></div><div class="tag" style="left:682.7px;top:6.0px;width:74px;background:#9b9b9b">+2</div><div class="tag" style="left:579.7px;top:6.0px;width:95px;background:#3f8e78">P20</div></div>
<div class="chip" style="left:2934.4px;top:543.0px;width:622.0px"><svg style="position:absolute;left:-1.7px;top:-1.4px" width="62" height="56" viewBox="0 0 62 56"><g fill="none" stroke="#cda200" stroke-width="2.600"><circle cx="34.250" cy="19" r="8.100"/><path d="M18.550 46.300V38.500Q18.550 32.300 25.500 31.700L40.500 31.100" stroke-linecap="round"/><path d="M47.250 36H34.950V49.900H56.350V36H49.850M45.950 31.800V39.200" stroke-linejoin="miter"/><path d="M41.750 43.750H49.850" stroke-width="2"/></g></svg><div class="t" style="left:68.6px;top:10.6px;font-size:36px;letter-spacing:0.35px;">Anamchara Foerstner</div><div class="tag" style="left:539.9px;top:6.0px;width:74px;background:#9b9b9b">+2</div><div class="tag" style="left:436.9px;top:6.0px;width:95px;background:#3f8e78">P14</div></div>
<div class="t" style="left:3957.0px;top:559.1px;font-size:31.5px;letter-spacing:0.423px;">- Encoder Transformer</div>
<div class="sep" style="left:1312px;top:728px;width:3208px"></div>
<div class="chip" style="left:1330.4px;top:646.0px;width:765.6px"><svg style="position:absolute;left:9.5px;top:4.5px;" width="48" height="48" viewBox="0 0 32 32" fill="#333"><g fill="none" stroke="#cda200"><rect x="5" y="5" width="22" height="22" rx="3.5" stroke-width="2.1"/><rect x="9.5" y="9.500" width="13" height="13" rx="1" stroke-width="2.1"/><path stroke-width="1.9" stroke-linecap="round" d="M11 2.600v2M16 2.600v2M21 2.600v2M11 27.400v2M16 27.400v2M21 27.400v2M2.600 11h2M2.600 16h2M2.600 21h2M27.400 11h2M27.400 16h2M27.400 21h2"/></g></svg><div class="t" style="left:68.4px;top:10.6px;font-size:36px;letter-spacing:0.134px;">C247-3833661 - Encoder Tr<span class="dots">...</span></div><div class="tag" style="left:683.5px;top:6.0px;width:74px;background:#9b9b9b">+2</div><div class="tag" style="left:580.5px;top:6.0px;width:95px;background:#3f8e78">P17</div></div>
<div class="chip" style="left:2132.4px;top:646.0px;width:764.8px"><svg style="position:absolute;left:9.5px;top:4.5px;" width="48" height="48" viewBox="0 0 32 32" fill="#333"><g fill="none" stroke="#cda200"><rect x="5" y="5" width="22" height="22" rx="3.5" stroke-width="2.1"/><rect x="9.5" y="9.500" width="13" height="13" rx="1" stroke-width="2.1"/><path stroke-width="1.9" stroke-linecap="round" d="M11 2.600v2M16 2.600v2M21 2.600v2M11 27.400v2M16 27.400v2M21 27.400v2M2.600 11h2M2.600 16h2M2.600 21h2M27.400 11h2M27.400 16h2M27.400 21h2"/></g></svg><div class="t" style="left:68.4px;top:10.6px;font-size:36px;letter-spacing:0.447px;">I892-8435352 - Heisenberg L<span class="dots">...</span></div><div class="tag" style="left:682.7px;top:6.0px;width:74px;background:#9b9b9b">+2</div><div class="tag" style="left:579.7px;top:6.0px;width:95px;background:#3f8e78">P20</div></div>
<div class="chip" style="left:2934.4px;top:646.0px;width:622.0px"><svg style="position:absolute;left:-1.7px;top:-1.4px" width="62" height="56" viewBox="0 0 62 56"><g fill="none" stroke="#cda200" stroke-width="2.600"><circle cx="34.250" cy="19" r="8.100"/><path d="M18.550 46.300V38.500Q18.550 32.300 25.500 31.700L40.500 31.100" stroke-linecap="round"/><path d="M47.250 36H34.950V49.900H56.350V36H49.850M45.950 31.800V39.200" stroke-linejoin="miter"/><path d="M41.750 43.750H49.850" stroke-width="2"/></g></svg><div class="t" style="left:68.6px;top:10.6px;font-size:36px;letter-spacing:0.35px;">Anamchara Foerstner</div><div class="tag" style="left:539.9px;top:6.0px;width:74px;background:#9b9b9b">+2</div><div class="tag" style="left:436.9px;top:6.0px;width:95px;background:#3f8e78">P14</div></div>
<div class="t" style="left:3957.0px;top:662.6px;font-size:31.5px;letter-spacing:0.423px;">- Encoder Transformer</div>
<div class="sep" style="left:1312px;top:831px;width:3208px"></div>
<div class="chip" style="left:1330.4px;top:750.0px;width:765.6px"><svg style="position:absolute;left:9.5px;top:4.5px;" width="48" height="48" viewBox="0 0 32 32" fill="#333"><g fill="none" stroke="#cda200"><rect x="5" y="5" width="22" height="22" rx="3.5" stroke-width="2.1"/><rect x="9.5" y="9.500" width="13" height="13" rx="1" stroke-width="2.1"/><path stroke-width="1.9" stroke-linecap="round" d="M11 2.600v2M16 2.600v2M21 2.600v2M11 27.400v2M16 27.400v2M21 27.400v2M2.600 11h2M2.600 16h2M2.600 21h2M27.400 11h2M27.400 16h2M27.400 21h2"/></g></svg><div class="t" style="left:68.4px;top:10.6px;font-size:36px;letter-spacing:0.126px;">E355-4376121 - Film Oscilla<span class="dots">...</span></div><div class="tag" style="left:683.5px;top:6.0px;width:74px;background:#9b9b9b">+2</div><div class="tag" style="left:580.5px;top:6.0px;width:95px;background:#3f8e78">P18</div></div>
<div class="chip" style="left:2132.4px;top:750.0px;width:764.8px"><svg style="position:absolute;left:9.5px;top:4.5px;" width="48" height="48" viewBox="0 0 32 32" fill="#333"><g fill="none" stroke="#cda200"><rect x="5" y="5" width="22" height="22" rx="3.5" stroke-width="2.1"/><rect x="9.5" y="9.500" width="13" height="13" rx="1" stroke-width="2.1"/><path stroke-width="1.9" stroke-linecap="round" d="M11 2.600v2M16 2.600v2M21 2.600v2M11 27.400v2M16 27.400v2M21 27.400v2M2.600 11h2M2.600 16h2M2.600 21h2M27.400 11h2M27.400 16h2M27.400 21h2"/></g></svg><div class="t" style="left:68.4px;top:10.6px;font-size:36px;letter-spacing:0.447px;">I892-8435352 - Heisenberg L<span class="dots">...</span></div><div class="tag" style="left:682.7px;top:6.0px;width:74px;background:#9b9b9b">+2</div><div class="tag" style="left:579.7px;top:6.0px;width:95px;background:#3f8e78">P20</div></div>
<div class="chip" style="left:2934.4px;top:750.0px;width:622.0px"><svg style="position:absolute;left:-1.7px;top:-1.4px" width="62" height="56" viewBox="0 0 62 56"><g fill="none" stroke="#cda200" stroke-width="2.600"><circle cx="34.250" cy="19" r="8.100"/><path d="M18.550 46.300V38.500Q18.550 32.300 25.500 31.700L40.500 31.100" stroke-linecap="round"/><path d="M47.250 36H34.950V49.900H56.350V36H49.850M45.950 31.800V39.200" stroke-linejoin="miter"/><path d="M41.750 43.750H49.850" stroke-width="2"/></g></svg><div class="t" style="left:68.6px;top:10.6px;font-size:36px;letter-spacing:0.35px;">Anamchara Foerstner</div><div class="tag" style="left:539.9px;top:6.0px;width:74px;background:#9b9b9b">+2</div><div class="tag" style="left:436.9px;top:6.0px;width:95px;background:#3f8e78">P14</div></div>
<div class="t" style="right:298.7px;top:766.1px;font-size:31.5px;letter-spacing:0.486px">Film Oscillator Dipole</div>
<div class="sep" style="left:1312px;top:935px;width:3208px"></div>
<div class="chip" style="left:1330.4px;top:853.0px;width:765.6px"><svg style="position:absolute;left:9.5px;top:4.5px;" width="48" height="48" viewBox="0 0 32 32" fill="#333"><g fill="none" stroke="#cda200"><rect x="5" y="5" width="22" height="22" rx="3.5" stroke-width="2.1"/><rect x="9.5" y="9.500" width="13" height="13" rx="1" stroke-width="2.1"/><path stroke-width="1.9" stroke-linecap="round" d="M11 2.600v2M16 2.600v2M21 2.600v2M11 27.400v2M16 27.400v2M21 27.400v2M2.600 11h2M2.600 16h2M2.600 21h2M27.400 11h2M27.400 16h2M27.400 21h2"/></g></svg><div class="t" style="left:68.4px;top:10.6px;font-size:36px;letter-spacing:0.278px;">G826-1197003 - Heisenberg <span class="dots">...</span></div><div class="tag" style="left:683.5px;top:6.0px;width:74px;background:#9b9b9b">+2</div><div class="tag" style="left:580.5px;top:6.0px;width:95px;background:#3f8e78">P19</div></div>
<div class="chip" style="left:2132.4px;top:853.0px;width:764.8px"><svg style="position:absolute;left:9.5px;top:4.5px;" width="48" height="48" viewBox="0 0 32 32" fill="#333"><g fill="none" stroke="#cda200"><rect x="5" y="5" width="22" height="22" rx="3.5" stroke-width="2.1"/><rect x="9.5" y="9.500" width="13" height="13" rx="1" stroke-width="2.1"/><path stroke-width="1.9" stroke-linecap="round" d="M11 2.600v2M16 2.600v2M21 2.600v2M11 27.400v2M16 27.400v2M21 27.400v2M2.600 11h2M2.600 16h2M2.600 21h2M27.400 11h2M27.400 16h2M27.400 21h2"/></g></svg><div class="t" style="left:68.4px;top:10.6px;font-size:36px;letter-spacing:0.447px;">I892-8435352 - Heisenberg L<span class="dots">...</span></div><div class="tag" style="left:682.7px;top:6.0px;width:74px;background:#9b9b9b">+2</div><div class="tag" style="left:579.7px;top:6.0px;width:95px;background:#3f8e78">P20</div></div>
<div class="chip" style="left:2934.4px;top:853.0px;width:622.0px"><svg style="position:absolute;left:-1.7px;top:-1.4px" width="62" height="56" viewBox="0 0 62 56"><g fill="none" stroke="#cda200" stroke-width="2.600"><circle cx="34.250" cy="19" r="8.100"/><path d="M18.550 46.300V38.500Q18.550 32.300 25.500 31.700L40.500 31.100" stroke-linecap="round"/><path d="M47.250 36H34.950V49.900H56.350V36H49.850M45.950 31.800V39.200" stroke-linejoin="miter"/><path d="M41.750 43.750H49.850" stroke-width="2"/></g></svg><div class="t" style="left:68.6px;top:10.6px;font-size:36px;letter-spacing:0.35px;">Anamchara Foerstner</div><div class="tag" style="left:539.9px;top:6.0px;width:74px;background:#9b9b9b">+2</div><div class="tag" style="left:436.9px;top:6.0px;width:95px;background:#3f8e78">P14</div></div>
<div class="t" style="left:3736.5px;top:869.6px;font-size:31.5px;letter-spacing:0.202px;">G826-1197003 - Heisenberg LCD Oscillator Breaker</div>
<div class="sep" style="left:1312px;top:1039px;width:3208px"></div>
<div class="chip" style="left:1330.4px;top:957.0px;width:765.6px"><svg style="position:absolute;left:9.5px;top:4.5px;" width="48" height="48" viewBox="0 0 32 32" fill="#333"><g fill="none" stroke="#cda200"><rect x="5" y="5" width="22" height="22" rx="3.5" stroke-width="2.1"/><rect x="9.5" y="9.500" width="13" height="13" rx="1" stroke-width="2.1"/><path stroke-width="1.9" stroke-linecap="round" d="M11 2.600v2M16 2.600v2M21 2.600v2M11 27.400v2M16 27.400v2M21 27.400v2M2.600 11h2M2.600 16h2M2.600 21h2M27.400 11h2M27.400 16h2M27.400 21h2"/></g></svg><div class="t" style="left:68.4px;top:10.6px;font-size:36px;letter-spacing:0.278px;">G826-1197003 - Heisenberg <span class="dots">...</span></div><div class="tag" style="left:683.5px;top:6.0px;width:74px;background:#9b9b9b">+2</div><div class="tag" style="left:580.5px;top:6.0px;width:95px;background:#3f8e78">P19</div></div>
<div class="chip" style="left:2132.4px;top:957.0px;width:764.8px"><svg style="position:absolute;left:9.5px;top:4.5px;" width="48" height="48" viewBox="0 0 32 32" fill="#333"><g fill="none" stroke="#cda200"><rect x="5" y="5" width="22" height="22" rx="3.5" stroke-width="2.1"/><rect x="9.5" y="9.500" width="13" height="13" rx="1" stroke-width="2.1"/><path stroke-width="1.9" stroke-linecap="round" d="M11 2.600v2M16 2.600v2M21 2.600v2M11 27.400v2M16 27.400v2M21 27.400v2M2.600 11h2M2.600 16h2M2.600 21h2M27.400 11h2M27.400 16h2M27.400 21h2"/></g></svg><div class="t" style="left:68.4px;top:10.6px;font-size:36px;letter-spacing:0.447px;">I892-8435352 - Heisenberg L<span class="dots">...</span></div><div class="tag" style="left:682.7px;top:6.0px;width:74px;background:#9b9b9b">+2</div><div class="tag" style="left:579.7px;top:6.0px;width:95px;background:#3f8e78">P20</div></div>
<div class="chip" style="left:2934.4px;top:957.0px;width:622.0px"><svg style="position:absolute;left:-1.7px;top:-1.4px" width="62" height="56" viewBox="0 0 62 56"><g fill="none" stroke="#cda200" stroke-width="2.600"><circle cx="34.250" cy="19" r="8.100"/><path d="M18.550 46.300V38.500Q18.550 32.300 25.500 31.700L40.500 31.100" stroke-linecap="round"/><path d="M47.250 36H34.950V49.900H56.350V36H49.850M45.950 31.800V39.200" stroke-linejoin="miter"/><path d="M41.750 43.750H49.850" stroke-width="2"/></g></svg><div class="t" style="left:68.6px;top:10.6px;font-size:36px;letter-spacing:0.35px;">Anamchara Foerstner</div><div class="tag" style="left:539.9px;top:6.0px;width:74px;background:#9b9b9b">+2</div><div class="tag" style="left:436.9px;top:6.0px;width:95px;background:#3f8e78">P14</div></div>
<div class="t" style="left:3736.5px;top:973.1px;font-size:31.5px;letter-spacing:0.202px;">G826-1197003 - Heisenberg LCD Oscillator Breaker</div>
<div class="sep" style="left:1312px;top:1142px;width:3208px"></div>
<div class="chip" style="left:1330.4px;top:1060.0px;width:765.6px"><svg style="position:absolute;left:9.5px;top:4.5px;" width="48" height="48" viewBox="0 0 32 32" fill="#333"><g fill="none" stroke="#cda200"><rect x="5" y="5" width="22" height="22" rx="3.5" stroke-width="2.1"/><rect x="9.5" y="9.500" width="13" height="13" rx="1" stroke-width="2.1"/><path stroke-width="1.9" stroke-linecap="round" d="M11 2.600v2M16 2.600v2M21 2.600v2M11 27.400v2M16 27.400v2M21 27.400v2M2.600 11h2M2.600 16h2M2.600 21h2M27.400 11h2M27.400 16h2M27.400 21h2"/></g></svg><div class="t" style="left:68.4px;top:10.6px;font-size:36px;letter-spacing:0.487px;">G826-1197003 - Heisenberg <span class="dots">...</span></div><div class="tag" style="left:683.5px;top:6.0px;width:74px;background:#9b9b9b">+2</div><div class="tag" style="left:580.5px;top:6.0px;width:95px;background:#3f8e78">P19</div></div>
<div class="chip" style="left:2132.4px;top:1060.0px;width:764.8px"><svg style="position:absolute;left:9.5px;top:4.5px;" width="48" height="48" viewBox="0 0 32 32" fill="#333"><g fill="none" stroke="#cda200"><rect x="5" y="5" width="22" height="22" rx="3.5" stroke-width="2.1"/><rect x="9.5" y="9.500" width="13" height="13" rx="1" stroke-width="2.1"/><path stroke-width="1.9" stroke-linecap="round" d="M11 2.600v2M16 2.600v2M21 2.600v2M11 27.400v2M16 27.400v2M21 27.400v2M2.600 11h2M2.600 16h2M2.600 21h2M27.400 11h2M27.400 16h2M27.400 21h2"/></g></svg><div class="t" style="left:68.4px;top:10.6px;font-size:36px;letter-spacing:0.447px;">I892-8435352 - Heisenberg L<span class="dots">...</span></div><div class="tag" style="left:682.7px;top:6.0px;width:74px;background:#9b9b9b">+2</div><div class="tag" style="left:579.7px;top:6.0px;width:95px;background:#3f8e78">P20</div></div>
<div class="chip" style="left:2934.4px;top:1060.0px;width:622.0px"><svg style="position:absolute;left:-1.7px;top:-1.4px" width="62" height="56" viewBox="0 0 62 56"><g fill="none" stroke="#cda200" stroke-width="2.600"><circle cx="34.250" cy="19" r="8.100"/><path d="M18.550 46.300V38.500Q18.550 32.300 25.500 31.700L40.500 31.100" stroke-linecap="round"/><path d="M47.250 36H34.950V49.900H56.350V36H49.850M45.950 31.800V39.200" stroke-linejoin="miter"/><path d="M41.750 43.750H49.850" stroke-width="2"/></g></svg><div class="t" style="left:68.6px;top:10.6px;font-size:36px;letter-spacing:0.35px;">Anamchara Foerstner</div><div class="tag" style="left:539.9px;top:6.0px;width:74px;background:#9b9b9b">+2</div><div class="tag" style="left:436.9px;top:6.0px;width:95px;background:#3f8e78">P14</div></div>
<div class="t" style="left:3736.5px;top:1076.6px;font-size:31.5px;letter-spacing:0.202px;">G826-1197003 - Heisenberg LCD Oscillator Breaker</div>
<div class="sep" style="left:1312px;top:1246px;width:3208px"></div>
<div class="chip" style="left:1330.4px;top:1164.0px;width:765.6px"><svg style="position:absolute;left:9.5px;top:4.5px;" width="48" height="48" viewBox="0 0 32 32" fill="#333"><g fill="none" stroke="#cda200"><rect x="5" y="5" width="22" height="22" rx="3.5" stroke-width="2.1"/><rect x="9.5" y="9.500" width="13" height="13" rx="1" stroke-width="2.1"/><path stroke-width="1.9" stroke-linecap="round" d="M11 2.600v2M16 2.600v2M21 2.600v2M11 27.400v2M16 27.400v2M21 27.400v2M2.600 11h2M2.600 16h2M2.600 21h2M27.400 11h2M27.400 16h2M27.400 21h2"/></g></svg><div class="t" style="left:68.4px;top:10.6px;font-size:36px;letter-spacing:0.487px;">G826-1197003 - Heisenberg <span class="dots">...</span></div><div class="tag" style="left:683.5px;top:6.0px;width:74px;background:#9b9b9b">+2</div><div class="tag" style="left:580.5px;top:6.0px;width:95px;background:#3f8e78">P19</div></div>
<div class="chip" style="left:2132.4px;top:1164.0px;width:764.8px"><svg style="position:absolute;left:9.5px;top:4.5px;" width="48" height="48" viewBox="0 0 32 32" fill="#333"><g fill="none" stroke="#cda200"><rect x="5" y="5" width="22" height="22" rx="3.5" stroke-width="2.1"/><rect x="9.5" y="9.500" width="13" height="13" rx="1" stroke-width="2.1"/><path stroke-width="1.9" stroke-linecap="round" d="M11 2.600v2M16 2.600v2M21 2.600v2M11 27.400v2M16 27.400v2M21 27.400v2M2.600 11h2M2.600 16h2M2.600 21h2M27.400 11h2M27.400 16h2M27.400 21h2"/></g></svg><div class="t" style="left:68.4px;top:10.6px;font-size:36px;letter-spacing:0.65px;">W726-4190110 - Ceramic M<span class="dots">...</span></div><div class="tag" style="left:682.7px;top:6.0px;width:74px;background:#9b9b9b">+2</div><div class="tag" style="left:579.7px;top:6.0px;width:95px;background:#3f8e78">P21</div></div>
<div class="chip" style="left:2934.4px;top:1164.0px;width:622.0px"><svg style="position:absolute;left:-1.7px;top:-1.4px" width="62" height="56" viewBox="0 0 62 56"><g fill="none" stroke="#cda200" stroke-width="2.600"><circle cx="34.250" cy="19" r="8.100"/><path d="M18.550 46.300V38.500Q18.550 32.300 25.500 31.700L40.500 31.100" stroke-linecap="round"/><path d="M47.250 36H34.950V49.900H56.350V36H49.850M45.950 31.800V39.200" stroke-linejoin="miter"/><path d="M41.750 43.750H49.850" stroke-width="2"/></g></svg><div class="t" style="left:68.6px;top:10.6px;font-size:36px;letter-spacing:0.35px;">Anamchara Foerstner</div><div class="tag" style="left:539.9px;top:6.0px;width:74px;background:#9b9b9b">+2</div><div class="tag" style="left:436.9px;top:6.0px;width:95px;background:#3f8e78">P14</div></div>
<div class="t" style="left:3736.5px;top:1180.1px;font-size:31.5px;letter-spacing:0.202px;">G826-1197003 - Heisenberg LCD Oscillator Breaker</div>
<div class="sep" style="left:1312px;top:1349px;width:3208px"></div>
<div class="chip" style="left:1330.4px;top:1267.0px;width:765.6px"><svg style="position:absolute;left:9.5px;top:4.5px;" width="48" height="48" viewBox="0 0 32 32" fill="#333"><g fill="none" stroke="#cda200"><rect x="5" y="5" width="22" height="22" rx="3.5" stroke-width="2.1"/><rect x="9.5" y="9.500" width="13" height="13" rx="1" stroke-width="2.1"/><path stroke-width="1.9" stroke-linecap="round" d="M11 2.600v2M16 2.600v2M21 2.600v2M11 27.400v2M16 27.400v2M21 27.400v2M2.600 11h2M2.600 16h2M2.600 21h2M27.400 11h2M27.400 16h2M27.400 21h2"/></g></svg><div class="t" style="left:68.4px;top:10.6px;font-size:36px;letter-spacing:0.491px;">N560-4369045 - Resistor Co<span class="dots">...</span></div><div class="tag" style="left:683.5px;top:6.0px;width:74px;background:#9b9b9b">+2</div><div class="tag" style="left:580.5px;top:6.0px;width:95px;background:#3f8e78">P17</div></div>
<div class="chip" style="left:2132.4px;top:1267.0px;width:764.8px"><svg style="position:absolute;left:9.5px;top:4.5px;" width="48" height="48" viewBox="0 0 32 32" fill="#333"><g fill="none" stroke="#cda200"><rect x="5" y="5" width="22" height="22" rx="3.5" stroke-width="2.1"/><rect x="9.5" y="9.500" width="13" height="13" rx="1" stroke-width="2.1"/><path stroke-width="1.9" stroke-linecap="round" d="M11 2.600v2M16 2.600v2M21 2.600v2M11 27.400v2M16 27.400v2M21 27.400v2M2.600 11h2M2.600 16h2M2.600 21h2M27.400 11h2M27.400 16h2M27.400 21h2"/></g></svg><div class="t" style="left:68.4px;top:10.6px;font-size:36px;letter-spacing:0.576px;">I965-1821441 - Multiplexer R<span class="dots">...</span></div><div class="tag" style="left:682.7px;top:6.0px;width:74px;background:#9b9b9b">+2</div><div class="tag" style="left:579.7px;top:6.0px;width:95px;background:#3f8e78">P16</div></div>
<div class="chip" style="left:2934.4px;top:1267.0px;width:551.5px"><svg style="position:absolute;left:-1.7px;top:-1.4px" width="62" height="56" viewBox="0 0 62 56"><g fill="none" stroke="#cda200" stroke-width="2.600"><circle cx="34.250" cy="19" r="8.100"/><path d="M18.550 46.300V38.500Q18.550 32.300 25.500 31.700L40.500 31.100" stroke-linecap="round"/><path d="M47.250 36H34.950V49.900H56.350V36H49.850M45.950 31.800V39.200" stroke-linejoin="miter"/><path d="M41.750 43.750H49.850" stroke-width="2"/></g></svg><div class="t" style="left:68.6px;top:10.6px;font-size:36px;letter-spacing:0.017px;">Herr Burgh Eichel</div><div class="tag" style="left:469.4px;top:6.0px;width:74px;background:#9b9b9b">+2</div><div class="tag" style="left:366.4px;top:6.0px;width:95px;background:#3f8e78">P13</div></div>
<div class="t" style="left:3736.5px;top:1283.6px;font-size:31.5px;letter-spacing:0.412px;">N560-4369045 - Resistor Compensator</div>
<div class="sep" style="left:1312px;top:1453px;width:3208px"></div>
<div class="chip" style="left:1330.4px;top:1371.0px;width:765.6px"><svg style="position:absolute;left:9.5px;top:4.5px;" width="48" height="48" viewBox="0 0 32 32" fill="#333"><g fill="none" stroke="#cda200"><rect x="5" y="5" width="22" height="22" rx="3.5" stroke-width="2.1"/><rect x="9.5" y="9.500" width="13" height="13" rx="1" stroke-width="2.1"/><path stroke-width="1.9" stroke-linecap="round" d="M11 2.600v2M16 2.600v2M21 2.600v2M11 27.400v2M16 27.400v2M21 27.400v2M2.600 11h2M2.600 16h2M2.600 21h2M27.400 11h2M27.400 16h2M27.400 21h2"/></g></svg><div class="t" style="left:68.4px;top:10.6px;font-size:36px;letter-spacing:0.491px;">N560-4369045 - Resistor Co<span class="dots">...</span></div><div class="tag" style="left:683.5px;top:6.0px;width:74px;background:#9b9b9b">+2</div><div class="tag" style="left:580.5px;top:6.0px;width:95px;background:#3f8e78">P17</div></div>
<div class="chip" style="left:2132.4px;top:1371.0px;width:764.8px"><svg style="position:absolute;left:9.5px;top:4.5px;" width="48" height="48" viewBox="0 0 32 32" fill="#333"><g fill="none" stroke="#cda200"><rect x="5" y="5" width="22" height="22" rx="3.5" stroke-width="2.1"/><rect x="9.5" y="9.500" width="13" height="13" rx="1" stroke-width="2.1"/><path stroke-width="1.9" stroke-linecap="round" d="M11 2.600v2M16 2.600v2M21 2.600v2M11 27.400v2M16 27.400v2M21 27.400v2M2.600 11h2M2.600 16h2M2.600 21h2M27.400 11h2M27.400 16h2M27.400 21h2"/></g></svg><div class="t" style="left:68.4px;top:10.6px;font-size:36px;letter-spacing:0.405px;">Q951-7651773 - Coil Compe<span class="dots">...</span></div><div class="tag" style="left:682.7px;top:6.0px;width:74px;background:#9b9b9b">+2</div><div class="tag" style="left:579.7px;top:6.0px;width:95px;background:#3f8e78">P17</div></div>
<div class="chip" style="left:2934.4px;top:1371.0px;width:551.5px"><svg style="position:absolute;left:-1.7px;top:-1.4px" width="62" height="56" viewBox="0 0 62 56"><g fill="none" stroke="#cda200" stroke-width="2.600"><circle cx="34.250" cy="19" r="8.100"/><path d="M18.550 46.300V38.500Q18.550 32.300 25.500 31.700L40.500 31.100" stroke-linecap="round"/><path d="M47.250 36H34.950V49.900H56.350V36H49.850M45.950 31.800V39.200" stroke-linejoin="miter"/><path d="M41.750 43.750H49.850" stroke-width="2"/></g></svg><div class="t" style="left:68.6px;top:10.6px;font-size:36px;letter-spacing:0.017px;">Herr Burgh Eichel</div><div class="tag" style="left:469.4px;top:6.0px;width:74px;background:#9b9b9b">+2</div><div class="tag" style="left:366.4px;top:6.0px;width:95px;background:#3f8e78">P13</div></div>
<div class="t" style="left:3736.5px;top:1387.1px;font-size:31.5px;letter-spacing:0.412px;">N560-4369045 - Resistor Compensator</div>
<div class="t" style="left:1330.4px;top:1478.1px;font-size:31.5px;color:#111;letter-spacing:0.08px;">Items per page:</div>
<div class="t" style="left:1590.0px;top:1478.1px;font-size:31.5px;color:#111;letter-spacing:0.2px;">10</div>
<svg style="position:absolute;left:1650.3px;top:1474.5px;" width="40" height="40" viewBox="0 0 32 32" fill="#111"><path d="M16 22L6 12l1.4-1.4 8.6 8.6 8.6-8.6L26 12z"/></svg>
<div style="position:absolute;left:1726.0px;top:1454.5px;width:2.3px;height:78.5px;background:#dcdcdc"></div>
<div class="t" style="left:1747.0px;top:1478.1px;font-size:31.5px;letter-spacing:0.55px;">1–10 of 2139 items</div>
<div style="position:absolute;left:3980.0px;top:1454.5px;width:2.3px;height:78.5px;background:#dcdcdc"></div>
<div class="t" style="left:4019.5px;top:1478.1px;font-size:31.5px;color:#111;">1</div>
<svg style="position:absolute;left:4078.0px;top:1474.5px;" width="40" height="40" viewBox="0 0 32 32" fill="#111"><path d="M16 22L6 12l1.4-1.4 8.6 8.6 8.6-8.6L26 12z"/></svg>
<div class="t" style="left:4157.8px;top:1478.1px;font-size:31.5px;letter-spacing:0.15px;">of 214 pages</div>
<div style="position:absolute;left:4361.0px;top:1454.5px;width:2.3px;height:78.5px;background:#dcdcdc"></div>
<svg style="position:absolute;left:4383.5px;top:1476.0px;" width="36" height="36" viewBox="0 0 32 32" fill="#a8a8a8"><path d="M20 24l-10-8 10-8z"/></svg>
<div style="position:absolute;left:4438.7px;top:1454.5px;width:2.3px;height:78.5px;background:#dcdcdc"></div>
<svg style="position:absolute;left:4462.5px;top:1476.0px;" width="36" height="36" viewBox="0 0 32 32" fill="#111"><path d="M12 8l10 8-10 8z"/></svg>
<svg style="position:absolute;left:3864.400px;top:404.500px" width="78" height="34" viewBox="0 0 78 34"><path d="M2 34C8 34 10.500 32.500 14 29L35.500 7.500Q39 4 42.500 7.500L64 29C67.500 32.500 70 34 76 34Z" fill="#fff" stroke="rgba(17,20,24,.15)" stroke-width="2"/></svg>
<div style="position:absolute;left:1759.0px;top:437.0px;width:2184.5px;height:578.0px;background:#fff;border-radius:5px;box-shadow:0 0 0 2.2px rgba(17,20,24,.13),0 4.500px 9px rgba(17,20,24,.22),0 18px 54px rgba(17,20,24,.22);"></div>
<div style="position:absolute;left:3868.0px;top:437.0px;width:72.0px;height:5.0px;background:#fff"></div>
<div class="t" style="left:1796.9px;top:474.2px;font-size:40.5px;letter-spacing:0.55px;">Define &quot;String&quot; filters for &quot;label&quot;</div>
<div style="position:absolute;left:3847.0px;top:455.5px;width:78.0px;height:78.0px;background:#cfcfcf;border-radius:5px"></div>
<svg style="position:absolute;left:3859.7px;top:468.7px;" width="52" height="52" viewBox="0 0 32 32" fill="#333"><circle cx="16" cy="8" r="2"/><circle cx="16" cy="16" r="2"/><circle cx="16" cy="24" r="2"/></svg>
<svg style="position:absolute;left:1795.6px;top:579.3px" width="40" height="40" viewBox="-20 -20 40 40"><circle r="16.800" fill="#fff" stroke="#000" stroke-width="2.400"/><circle r="8" fill="#000"/></svg>
<div class="t" style="left:1856.4px;top:582.0px;font-size:36px;letter-spacing:-0.14px;">Pattern</div>
<svg style="position:absolute;left:2499.6px;top:579.3px" width="40" height="40" viewBox="-20 -20 40 40"><circle r="16.800" fill="#fff" stroke="#000" stroke-width="2.400"/></svg>
<div class="t" style="left:2560.5px;top:582.0px;font-size:36px;letter-spacing:-0.7px;">Equals</div>
<svg style="position:absolute;left:3203.0px;top:579.3px" width="40" height="40" viewBox="-20 -20 40 40"><circle r="16.800" fill="#fff" stroke="#000" stroke-width="2.400"/></svg>
<div class="t" style="left:3264.4px;top:582.0px;font-size:36px;letter-spacing:-1.43px;">Regex</div>
<div style="position:absolute;left:1795.0px;top:646.2px;width:2112.0px;height:2.3px;background:#e1e1e1"></div>
<div class="t" style="left:1795.2px;top:677.6px;font-size:31.5px;">Starts with</div>
<div class="t" style="left:1795.2px;top:729.1px;font-size:31.5px;color:#666;letter-spacing:0.02px;">If set, the string must start with this prefix.</div>
<div class="inp" style="left:1795.0px;top:778.8px;width:752.8px;height:85.2px"></div>
<div class="t" style="left:1814.3px;top:803.5px;font-size:36px;color:#8c8c8c;letter-spacing:-0.2px;">prefix...</div>
<div class="t" style="left:2566.2px;top:677.6px;font-size:31.5px;">Contains</div>
<div class="t" style="left:2566.2px;top:729.1px;font-size:31.5px;color:#666;letter-spacing:0.077px;">Tests if strings include this term.</div>
<div class="inp" style="left:2566.0px;top:778.8px;width:620.5px;height:85.2px"></div>
<div class="t" style="left:2585.3px;top:803.5px;font-size:36px;color:#8c8c8c;letter-spacing:-0.2px;">text...</div>
<div class="t" style="left:3206.2px;top:677.6px;font-size:31.5px;">Ends with</div>
<div class="t" style="left:3206.2px;top:729.1px;font-size:31.5px;color:#666;letter-spacing:0.072px;">Tests if the string ends with this suffix.</div>
<div class="inp" style="left:3206.0px;top:778.8px;width:701px;height:85.2px"></div>
<div class="t" style="left:3225.3px;top:803.5px;font-size:36px;color:#8c8c8c;letter-spacing:-0.2px;">suffix...</div>
<div style="position:absolute;left:3421.2px;top:919.3px;width:143.5px;height:77.0px;background:#d8d8d8;border-radius:5px"></div>
<div class="t" style="left:3448.6px;top:938.9px;font-size:36px;color:#9c9c9c;letter-spacing:-0.5px;">Reset</div>
<div style="position:absolute;left:3583.4px;top:919.3px;width:162.6px;height:77.0px;box-sizing:border-box;background:#f2f3f5;border:2.2px solid #c6c6c6;border-radius:5px;box-shadow:0 2px 3px rgba(0,0,0,.15)"></div>
<div class="t" style="left:3610.0px;top:938.9px;font-size:36px;letter-spacing:-0.3px;">Cancel</div>
<div style="position:absolute;left:3763.3px;top:919.3px;width:143.7px;height:77.0px;background:#2d6cab;border-radius:5px"></div>
<svg style="position:absolute;left:3846.700px;top:540.500px" width="78" height="34" viewBox="0 0 78 34"><path d="M2 34C8 34 10.500 32.500 14 29L35.500 7.500Q39 4 42.500 7.500L64 29C67.500 32.500 70 34 76 34Z" fill="#fff" stroke="rgba(17,20,24,.15)" stroke-width="2"/></svg>
<div style="position:absolute;left:3765.0px;top:573.0px;width:243.0px;height:546.0px;background:#fff;border-radius:5px;box-shadow:0 0 0 2.2px rgba(17,20,24,.13),0 4.500px 9px rgba(17,20,24,.22),0 18px 54px rgba(17,20,24,.22);"></div>
<div style="position:absolute;left:3850.0px;top:573.0px;width:72.0px;height:5.0px;background:#fff"></div>
<div style="position:absolute;left:3766.5px;top:574.5px;width:240.0px;height:76.0px;background:#eef3f8;border-radius:4px"></div>
<div class="t" style="left:3778.7px;top:594.1px;font-size:36px;color:#2f6fa7;letter-spacing:-0.12px;">String</div>
<svg style="position:absolute;left:3779.6px;top:664.1px;" width="48.5" height="48.5" viewBox="0 0 32 32" fill="#333"><path d="M16.9,3.1a1.03,1.03,0,0,0-1.8,0L1.6,28.3A1.1,1.1,0,0,0,2.5,30h27a1.1,1.1,0,0,0,.9-1.7Z"/><path fill="#fff" d="M14.9 11.5h2.2v10h-2.2z"/><circle fill="#fff" cx="16" cy="25" r="1.45"/></svg>
<div class="t" style="left:3844.3px;top:671.9px;font-size:36px;letter-spacing:0.24px;">Numeric</div>
<svg style="position:absolute;left:3779.6px;top:742.0px;" width="48.5" height="48.5" viewBox="0 0 32 32" fill="#333"><path d="M16.9,3.1a1.03,1.03,0,0,0-1.8,0L1.6,28.3A1.1,1.1,0,0,0,2.5,30h27a1.1,1.1,0,0,0,.9-1.7Z"/><path fill="#fff" d="M14.9 11.5h2.2v10h-2.2z"/><circle fill="#fff" cx="16" cy="25" r="1.45"/></svg>
<div class="t" style="left:3844.3px;top:749.7px;font-size:36px;letter-spacing:-0.836px;">Date</div>
<svg style="position:absolute;left:3779.6px;top:819.8px;" width="48.5" height="48.5" viewBox="0 0 32 32" fill="#333"><path d="M16.9,3.1a1.03,1.03,0,0,0-1.8,0L1.6,28.3A1.1,1.1,0,0,0,2.5,30h27a1.1,1.1,0,0,0,.9-1.7Z"/><path fill="#fff" d="M14.9 11.5h2.2v10h-2.2z"/><circle fill="#fff" cx="16" cy="25" r="1.45"/></svg>
<div class="t" style="left:3844.3px;top:827.5px;font-size:36px;letter-spacing:-0.374px;">Boolean</div>
<svg style="position:absolute;left:3779.6px;top:897.5px;" width="48.5" height="48.5" viewBox="0 0 32 32" fill="#333"><path d="M16.9,3.1a1.03,1.03,0,0,0-1.8,0L1.6,28.3A1.1,1.1,0,0,0,2.5,30h27a1.1,1.1,0,0,0,.9-1.7Z"/><path fill="#fff" d="M14.9 11.5h2.2v10h-2.2z"/><circle fill="#fff" cx="16" cy="25" r="1.45"/></svg>
<div class="t" style="left:3844.3px;top:905.3px;font-size:36px;letter-spacing:-0.609px;">Resource</div>
<div class="t" style="left:3779.4px;top:983.1px;font-size:36px;letter-spacing:-0.055px;">Term Type</div>
<div class="t" style="left:3779.4px;top:1060.9px;font-size:36px;letter-spacing:-0.213px;">Literal Type</div>
</body></html>
